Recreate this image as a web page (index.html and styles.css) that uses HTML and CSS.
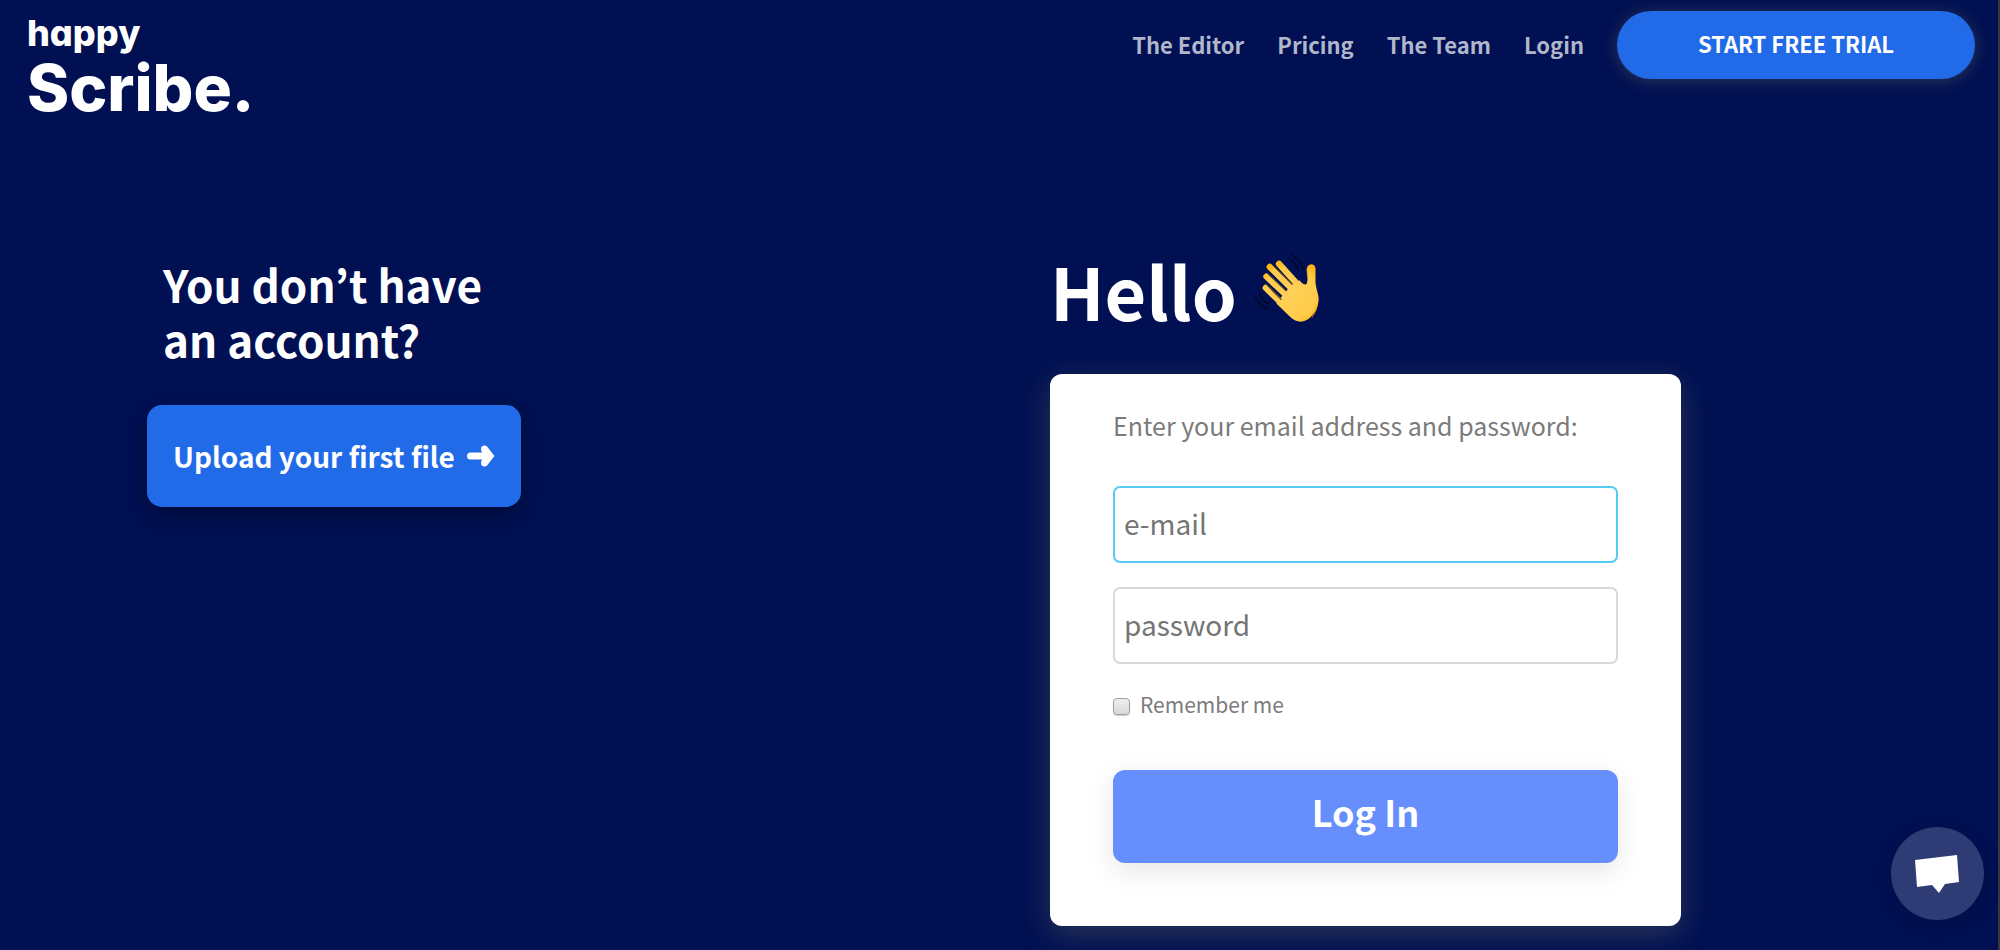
FILE: index.html
```html
<!DOCTYPE html>
<html lang="en">
<head>
    <meta charset="UTF-8">
    <meta name="viewport" content="width=device-width, initial-scale=1.0">
    <title>Happy Scribe</title>
    <link rel="stylesheet" href="styles.css">
</head>
<body>
    <header class="header">
        <a href="#" class="logo">
            <span class="logo-small">happy</span>
            <span class="logo-big">Scribe.</span>
        </a>
        <nav class="nav">
            <a href="#" class="nav-link">The Editor</a>
            <a href="#" class="nav-link">Pricing</a>
            <a href="#" class="nav-link">The Team</a>
            <a href="#" class="nav-link">Login</a>
            <a href="#" class="trial">START FREE TRIAL</a>
        </nav>
    </header>

    <main class="main">
        <section class="signup">
            <h2 class="signup-title">You don’t have<br>an account?</h2>
            <a href="#" class="upload">Upload your first file
                <svg class="arrow" viewBox="0 0 28 22" aria-hidden="true">
                    <path d="M3.500 11H19" stroke="#fff" stroke-width="7" stroke-linecap="round"/>
                    <path d="M14 4.500Q13.500 2 16 .7Q18.500 0 20 1.500L27.500 11L20 20.500Q18.500 22 16 21.300Q13.500 20 14 17.500L16 11Z" fill="#fff"/>
                </svg>
            </a>
        </section>

        <section class="login">
            <h1 class="hello">Hello
                <svg class="wave" viewBox="665 45 201 205" aria-hidden="true">
                    <defs>
                        <radialGradient id="skin" gradientUnits="userSpaceOnUse" cx="775" cy="165" r="105">
                            <stop offset="0" stop-color="#ffd15a"/>
                            <stop offset=".75" stop-color="#ffcc4a"/>
                            <stop offset="1" stop-color="#fdb515"/>
                        </radialGradient>
                    </defs>
                    <g fill="none" stroke="url(#skin)" stroke-width="19" stroke-linecap="round">
                        <path d="M743 75L802 140"/>
                        <path d="M715 84L790 158"/>
                        <path d="M705 113L775 178"/>
                        <path d="M703 147L770 212"/>
                    </g>
                    <path fill="url(#skin)" d="M744 182L764 157L782 137L805 124Q815 138 824 137Q829 133 829 117L827 91Q827 77 841 76Q853 77 853 91V132Q855 149 860 165Q867 190 854 215Q835 247 808 249Q790 249 773 231L735 194Z"/>
                    <path d="M843 236Q856 220 859 197M829 115L827 91" fill="none" stroke="#f5a300" stroke-width="3" stroke-linecap="round" opacity=".7"/>
                    <path d="M729 83L782 136M709 104L764 156M704 136L749 182" fill="none" stroke="#573f26" stroke-width="3.500" stroke-linecap="round"/>
                    <path d="M782 48Q806 61 815 88M775 61Q794 74 802 94M671 171Q680 197 707 210M685 167Q694 186 713 196" fill="none" stroke="#00051c" stroke-width="4" stroke-linecap="round"/>
                </svg>
            </h1>
            <form class="card">
                <p class="intro">Enter your email address and password:</p>
                <input type="email" class="field field-active" placeholder="e-mail" aria-label="e-mail">
                <input type="password" class="field" placeholder="password" aria-label="password">
                <div class="remember">
                    <input type="checkbox" id="remember" class="checkbox">
                    <label for="remember">Remember me</label>
                </div>
                <button type="submit" class="submit">Log In</button>
            </form>
        </section>
    </main>

    <button type="button" class="chat" aria-label="Chat">
        <svg class="chat-icon" viewBox="0 0 46 40" aria-hidden="true">
            <path d="M0 6L42 1L44 28L30 30L24 39L17 31L2 33Z" fill="#fff"/>
        </svg>
    </button>
</body>
</html>
```
FILE: styles.css
```css
* {
    box-sizing: border-box;
}
body {
    margin: 0;
    min-height: 100vh;
    background-color: #001052;
    border-right: 2px solid #35383f;
    color: #fff;
    font-family: "Noto Sans CJK KR", "Noto Sans", sans-serif;
}
a {
    color: inherit;
    text-decoration: none;
}
.header {
    display: flex;
    justify-content: space-between;
    align-items: flex-start;
    padding: 11px 23px 0 27px;
}
.logo {
    display: flex;
    flex-direction: column;
    font-family: Inter, sans-serif;
    font-feature-settings: "cv11";
    font-weight: 800;
}
.logo-small {
    font-size: 36px;
    line-height: 44px;
}
.logo-big {
    font-size: 64px;
    line-height: 66px;
}
.nav {
    display: flex;
    align-items: center;
    gap: 33px;
    font-size: 22px;
    font-weight: bold;
}
.nav-link {
    padding-bottom: 2px;
    color: #b0b6cb;
}
.trial {
    width: 358px;
    padding-bottom: 4px;
    border-radius: 34px;
    background-color: #226be8;
    box-shadow: 0 2px 16px rgba(170, 170, 110, 0.25);
    line-height: 64px;
    text-align: center;
}
.main {
    display: grid;
    grid-template-columns: 1fr 1fr;
    padding-top: 127px;
}
.signup {
    padding: 9px 0 0 147px;
}
.signup-title {
    margin: 0 0 38px 16px;
    font-size: 44px;
    line-height: 55px;
}
.upload {
    display: inline-flex;
    align-items: center;
    gap: 12px;
    padding: 0 26px;
    border-radius: 15px;
    background-color: #226be8;
    box-shadow: 0 8px 20px rgba(0, 0, 0, 0.3);
    font-size: 28px;
    font-weight: bold;
    line-height: 102px;
}
.arrow {
    width: 28px;
    height: 22px;
    fill: none;
}
.login {
    padding: 0 51px;
}
.hello {
    display: flex;
    align-items: center;
    gap: 16px;
    margin: 0 0 42px;
    font-size: 72px;
    line-height: 84px;
}
.wave {
    width: 67px;
    height: 68px;
    margin-bottom: 4px;
}
.card {
    display: flex;
    flex-direction: column;
    max-width: 631px;
    padding: 32px 63px 63px;
    border-radius: 12px;
    background-color: #fff;
    box-shadow: 0 8px 32px rgba(170, 170, 110, 0.25);
    color: #7b7b7b;
}
.intro {
    margin: 0 0 42px;
    font-size: 25px;
    line-height: 38px;
}
.field {
    width: 100%;
    height: 77px;
    margin-bottom: 24px;
    padding: 0 9px 4px;
    border: 2px solid #d8d8d8;
    border-radius: 7px;
    background-color: #fff;
    font-family: inherit;
    font-size: 28px;
}
.field-active {
    border-color: #55caf2;
}
.field::placeholder {
    color: #757575;
}
.remember {
    display: flex;
    align-items: center;
    gap: 10px;
    margin-bottom: 50px;
    font-size: 21px;
    line-height: 32px;
}
.checkbox {
    appearance: none;
    width: 17px;
    height: 17px;
    margin: 4px 0 0;
    border: 1px solid #a0a0a0;
    border-radius: 4px;
    background: linear-gradient(#eee, #d8d8d8);
    box-shadow: 0 1px 1px rgba(0, 0, 0, 0.2);
}
.submit {
    height: 93px;
    padding: 0 0 12px;
    border: 0;
    border-radius: 12px;
    background-color: #668ffd;
    box-shadow: 0 8px 28px rgba(0, 0, 0, 0.1);
    color: #fff;
    font-family: inherit;
    font-size: 36px;
    font-weight: bold;
}
.chat {
    position: fixed;
    right: 16px;
    bottom: 30px;
    display: flex;
    align-items: center;
    justify-content: center;
    width: 93px;
    height: 93px;
    padding: 0;
    border: 0;
    border-radius: 50%;
    background-color: #2e3b75;
    box-shadow: 0 4px 20px rgba(0, 0, 0, 0.15);
}
.chat-icon {
    width: 46px;
    height: 40px;
}
```
